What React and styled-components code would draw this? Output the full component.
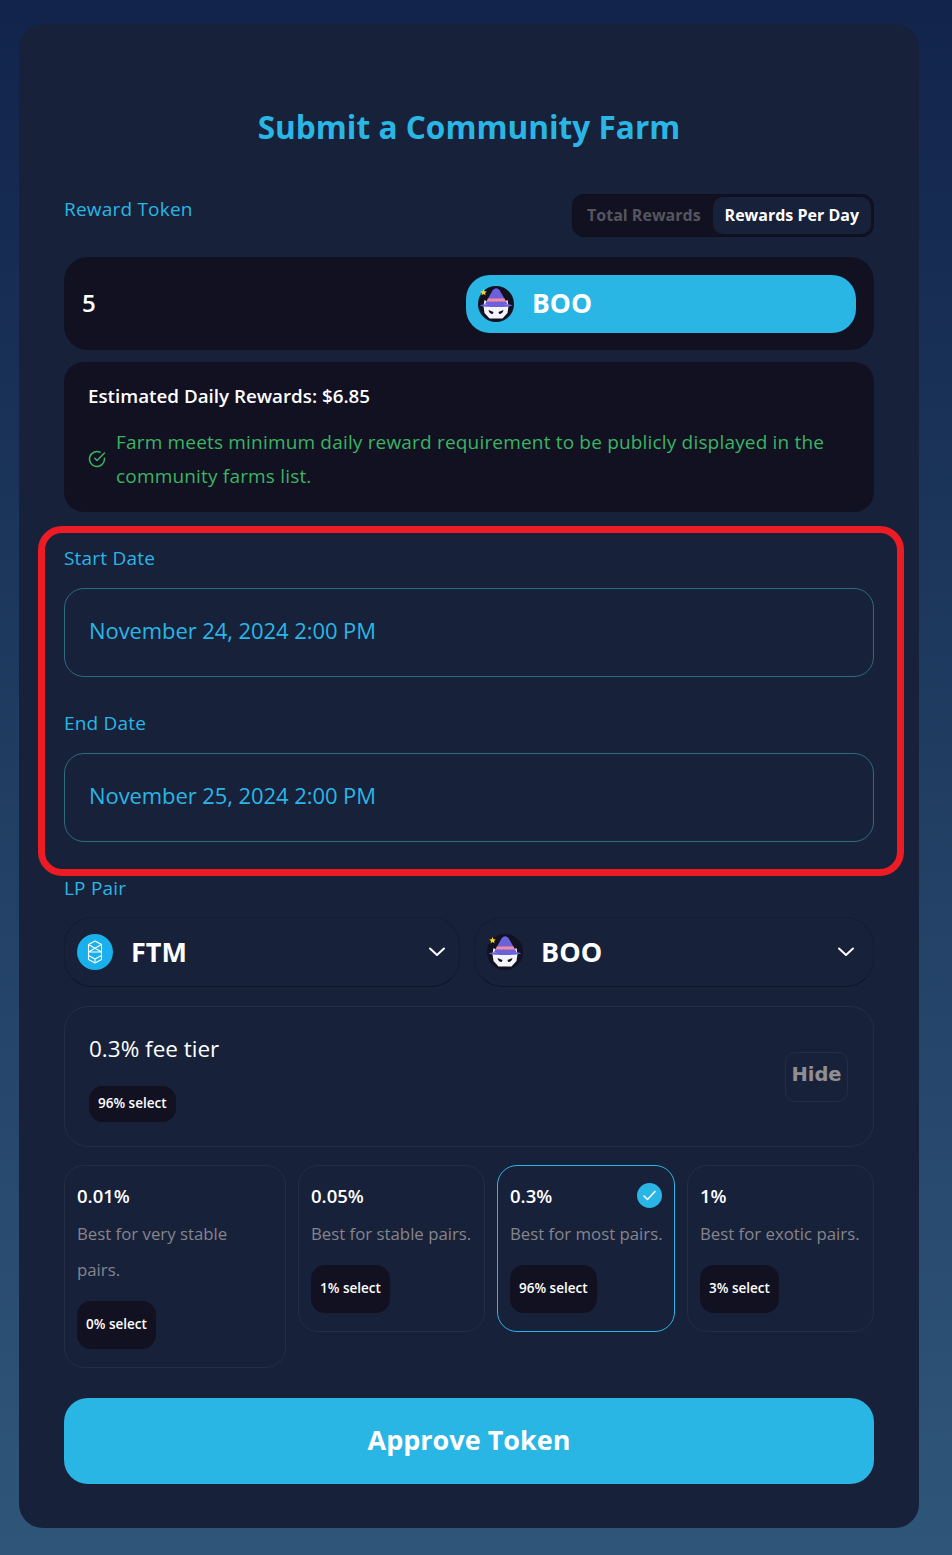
import React from 'react';
import styled, { createGlobalStyle } from 'styled-components';

const font = '"Open Sans", "Noto Sans", sans-serif';
const sky = '#29b6e5';
const navy = '#18213a';
const ink = '#111122';

const GlobalStyle = createGlobalStyle`
  html, body { margin: 0; padding: 0; }
  body {
    width: 952px;
    height: 1555px;
    background: linear-gradient(180deg, #12244b 0%, #2f5679 100%);
    font-family: ${font};
  }
`;

const Page = styled.div`
  padding: 24px 33px 27px 19px;
`;

const Card = styled.main`
  position: relative;
  height: 1504px;
  box-sizing: border-box;
  padding: 0 45px;
  background: ${navy};
  border-radius: 24px;
`;

const Title = styled.h1`
  margin: 0;
  padding-top: 81px;
  height: 89px;
  font-size: 31.6px;
  line-height: 44px;
  font-weight: 700;
  color: ${sky};
  text-align: center;
`;

const Label = styled.div`
  font-size: 19px;
  letter-spacing: 0.2px;
  line-height: 24px;
  color: ${sky};
`;

const RewardHead = styled.div`
  display: flex;
  justify-content: space-between;
  align-items: flex-start;
  height: 63px;
  ${Label} { margin-top: 3px; }
`;

const Toggle = styled.div`
  display: flex;
  box-sizing: border-box;
  height: 43px;
  padding: 2px;
  background: ${ink};
  border: 1px solid #0d1020;
  border-radius: 12px;
`;

const ToggleItem = styled.div`
  display: flex;
  align-items: center;
  padding: 0 12px 1px;
  font-size: 16px;
  font-weight: 700;
  border-radius: 10px;
  color: ${p => (p.$active ? '#fff' : '#55555f')};
  background: ${p => (p.$active ? navy : 'transparent')};
`;

const AmountRow = styled.div`
  display: flex;
  align-items: center;
  justify-content: space-between;
  height: 93px;
  padding: 0 18px;
  background: ${ink};
  border-radius: 24px;
`;

const Amount = styled.span`
  margin-top: -2px;
  font-size: 24px;
  font-weight: 600;
  color: #fff;
`;

const TokenName = styled.span`
  margin-top: -2px;
`;

const TokenButton = styled.div`
  display: flex;
  align-items: center;
  gap: 18px;
  box-sizing: border-box;
  width: 390px;
  height: 58px;
  padding-left: 12px;
  background: ${sky};
  border-radius: 24px;
  font-size: 26.500px;
  font-weight: 700;
  color: #fff;
`;

const InfoBox = styled.div`
  box-sizing: border-box;
  height: 150px;
  margin-top: 12px;
  padding: 17px 24px;
  background: ${ink};
  border-radius: 20px;
`;

const InfoTitle = styled.div`
  font-size: 18.8px;
  line-height: 34px;
  font-weight: 600;
  color: #fff;
`;

const Notice = styled.div`
  display: flex;
  align-items: center;
  gap: 10px;
  margin-top: 12px;
  font-size: 19px;
  letter-spacing: 0.18px;
  line-height: 34px;
  color: #3cb463;
  svg { flex: none; }
`;

const DateGroup = styled.div`
  margin-top: 34px;
`;

const DateInput = styled.div`
  display: flex;
  align-items: center;
  box-sizing: border-box;
  height: 89px;
  margin-top: 18px;
  padding: 0 0 6px 24px;
  border: 1px solid #2b6c80;
  border-radius: 20px;
  font-size: 22px;
  letter-spacing: -0.08px;
  color: ${sky};
`;

const Highlight = styled.div`
  position: absolute;
  left: 19px;
  top: 502px;
  width: 866px;
  height: 350px;
  box-sizing: border-box;
  border: 7px solid #ed1c24;
  border-radius: 24px;
  pointer-events: none;
`;

const PairRow = styled.div`
  display: grid;
  grid-template-columns: 396px 400px;
  gap: 14px;
  margin-top: 17px;
`;

const PairSelect = styled.div`
  display: flex;
  align-items: center;
  gap: 18px;
  box-sizing: border-box;
  height: 70px;
  padding: 0 ${p => p.$right}px 0 12px;
  border: 1px solid #151c32;
  border-bottom-color: #0f1326;
  border-radius: 28px;
  font-size: 27px;
  font-weight: 700;
  color: #fff;
  svg:last-child { margin-left: auto; }
`;

const TierPanel = styled.div`
  display: flex;
  justify-content: space-between;
  align-items: center;
  box-sizing: border-box;
  height: 141px;
  margin-top: 19px;
  padding: 0 25px 0 24px;
  border: 1px solid #252d45;
  border-radius: 24px;
`;

const TierName = styled.div`
  font-size: 22.500px;
  line-height: 36px;
  font-weight: 500;
  color: #fff;
`;

const Badge = styled.div`
  display: flex;
  align-items: center;
  width: fit-content;
  box-sizing: border-box;
  height: ${p => p.$height || 48}px;
  margin-top: ${p => p.$top}px;
  padding: 0 9px 2px;
  background: ${ink};
  border-radius: 14px;
  font-size: 13.500px;
  font-weight: 600;
  color: #fff;
`;

const HideButton = styled.div`
  display: flex;
  align-items: center;
  justify-content: center;
  box-sizing: border-box;
  width: 63px;
  height: 50px;
  padding-bottom: 4px;
  border: 1px solid #252d45;
  border-radius: 10px;
  font-family: "DejaVu Sans", sans-serif;
  font-size: 19.500px;
  font-weight: 700;
  color: #8f8f93;
`;

const TierGrid = styled.div`
  display: grid;
  grid-template-columns: 222px 187px 178px 187px;
  gap: 12px;
  align-items: start;
  margin-top: 18px;
`;

const TierCard = styled.div`
  position: relative;
  box-sizing: border-box;
  padding: 13px 12px 18px;
  border: 1px solid ${p => (p.$selected ? sky : '#252d45')};
  border-radius: 20px;
`;

const TierRate = styled.div`
  font-size: 18.500px;
  line-height: 34px;
  font-weight: 600;
  color: #fff;
`;

const TierText = styled.div`
  margin-top: 3px;
  font-size: 16.8px;
  line-height: 36px;
  white-space: pre;
  color: #85858c;
`;

const SelectedMark = styled.div`
  position: absolute;
  top: 17px;
  right: 12px;
  display: flex;
  align-items: center;
  justify-content: center;
  width: 25px;
  height: 25px;
  border-radius: 50%;
  background: ${sky};
`;

const ApproveButton = styled.div`
  display: flex;
  align-items: center;
  justify-content: center;
  height: 86px;
  margin-top: 30px;
  padding-bottom: 4px;
  box-sizing: border-box;
  background: ${sky};
  border-radius: 24px;
  font-size: 27px;
  font-weight: 700;
  color: #fff;
`;

function BooIcon({ size = 36 }) {
  return (
    <svg width={size} height={size} viewBox="0 0 36 36">
      <circle cx="18" cy="18" r="18" fill="#111122" />
      <path d="M5.500 20l1-6 5 3h13l5-3 1 6-1 7-5 5.500H11.500l-5-5.500z" fill="#f4f4fa" />
      <path d="M7 18L14.500 4.500Q18 0.500 21.500 4L29.500 18z" fill="#6c60dc" />
      <path d="M10 12.500h16.500l1.500 3H8.500z" fill="#f28b9b" />
      <path d="M1.500 19.500c4-2.500 29-2.500 33 0-5 2-28 2-33 0z" fill="#6c60dc" />
      <path d="M10.500 24l5 2-.7 2c-2.300 0-3.800-1.500-4.300-4zM25.500 24l-5 2 .7 2c2.300 0 3.800-1.500 4.300-4z" fill="#111122" />
      <path d="M5.500 3l1 2.200 2.300.2-1.700 1.500.5 2.300-2.100-1.200-2 1.200.5-2.300L2.300 5.400l2.300-.2z" fill="#ffd51e" />
    </svg>
  );
}

function FtmIcon() {
  return (
    <svg width="36" height="36" viewBox="0 0 36 36">
      <circle cx="18" cy="18" r="18" fill="#19b0ec" />
      <g fill="none" stroke="#fff" strokeWidth="1.100" strokeLinejoin="round">
        <path d="M18 7l6.500 3.500v15L18 29l-6.500-3.500v-15z" />
        <path d="M11.500 10.500L24.500 18M24.500 10.500L11.500 18M11.500 18h13M11.500 21.500L18 25l6.500-3.500M18 25v4" />
      </g>
    </svg>
  );
}

function Chevron() {
  return (
    <svg width="18" height="18" viewBox="0 0 18 18" fill="none" stroke="#fff" strokeWidth="2" strokeLinecap="round" strokeLinejoin="round">
      <path d="M2 5.500l7 6.500 7-6.500" />
    </svg>
  );
}

const tiers = [
  { rate: '0.01%', text: 'Best for very stable\npairs.', share: '0% select' },
  { rate: '0.05%', text: 'Best for stable pairs.', share: '1% select' },
  { rate: '0.3%', text: 'Best for most pairs.', share: '96% select', selected: true },
  { rate: '1%', text: 'Best for exotic pairs.', share: '3% select' },
];

export default function App() {
  return (
    <>
      <GlobalStyle />
      <Page>
        <Card>
          <Title>Submit a Community Farm</Title>
          <RewardHead>
            <Label>Reward Token</Label>
            <Toggle>
              <ToggleItem>Total Rewards</ToggleItem>
              <ToggleItem $active>Rewards Per Day</ToggleItem>
            </Toggle>
          </RewardHead>
          <AmountRow>
            <Amount>5</Amount>
            <TokenButton>
              <BooIcon />
              <TokenName>BOO</TokenName>
            </TokenButton>
          </AmountRow>
          <InfoBox>
            <InfoTitle>Estimated Daily Rewards: $6.85</InfoTitle>
            <Notice>
              <svg width="18" height="18" viewBox="0 0 18 18" fill="none" stroke="#3cb463" strokeWidth="1.500" strokeLinecap="round" strokeLinejoin="round">
                <path d="M16.500 8.300V9a7.500 7.500 0 1 1-4.400-6.800" />
                <path d="M16.500 3L9 10.500 6.800 8.300" />
              </svg>
              <span>Farm meets minimum daily reward requirement to be publicly displayed in the community farms list.</span>
            </Notice>
          </InfoBox>
          <DateGroup>
            <Label>Start Date</Label>
            <DateInput>November 24, 2024 2:00 PM</DateInput>
          </DateGroup>
          <DateGroup>
            <Label>End Date</Label>
            <DateInput>November 25, 2024 2:00 PM</DateInput>
          </DateGroup>
          <DateGroup>
            <Label>LP Pair</Label>
          </DateGroup>
          <PairRow>
            <PairSelect $right={13}>
              <FtmIcon />
              <TokenName>FTM</TokenName>
              <Chevron />
            </PairSelect>
            <PairSelect $right={18}>
              <BooIcon />
              <TokenName>BOO</TokenName>
              <Chevron />
            </PairSelect>
          </PairRow>
          <TierPanel>
            <div>
              <TierName>0.3% fee tier</TierName>
              <Badge $height={36} $top={19}>96% select</Badge>
            </div>
            <HideButton>Hide</HideButton>
          </TierPanel>
          <TierGrid>
            {tiers.map(t => (
              <TierCard key={t.rate} $selected={t.selected}>
                <TierRate>{t.rate}</TierRate>
                {t.selected && (
                  <SelectedMark>
                    <svg width="15" height="15" viewBox="0 0 15 15" fill="none" stroke="#fff" strokeWidth="1.500" strokeLinecap="round" strokeLinejoin="round">
                      <path d="M2 8l3.500 3.500L13 3.500" />
                    </svg>
                  </SelectedMark>
                )}
                <TierText>{t.text}</TierText>
                <Badge $top={13}>{t.share}</Badge>
              </TierCard>
            ))}
          </TierGrid>
          <ApproveButton>Approve Token</ApproveButton>
          <Highlight />
        </Card>
      </Page>
    </>
  );
}
